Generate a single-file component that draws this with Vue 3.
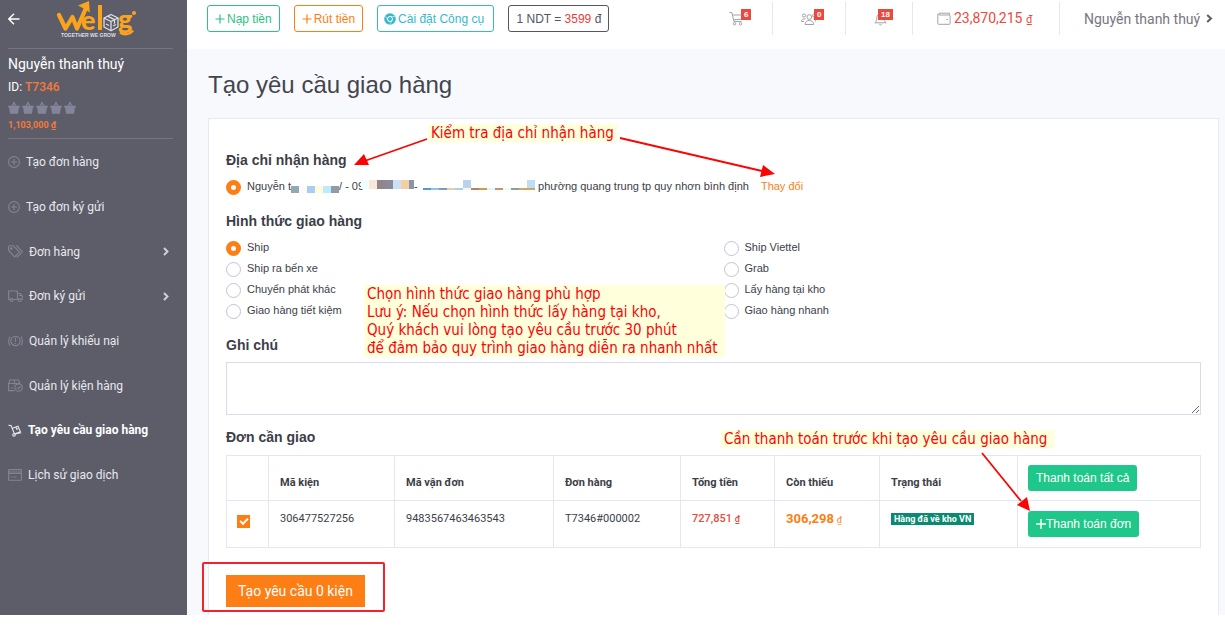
<script setup>
import { ref } from 'vue'

const menu = [
  { icon: 'plus', label: 'Tạo đơn hàng' },
  { icon: 'plus', label: 'Tạo đơn ký gửi' },
  { icon: 'tags', label: 'Đơn hàng', sub: true },
  { icon: 'truck', label: 'Đơn ký gửi', sub: true },
  { icon: 'alert', label: 'Quản lý khiếu nại' },
  { icon: 'box', label: 'Quản lý kiện hàng' },
  { icon: 'trolley', label: 'Tạo yêu cầu giao hàng', active: true },
  { icon: 'card', label: 'Lịch sử giao dịch' }
]

const methods = [
  'Ship', 'Ship Viettel',
  'Ship ra bến xe', 'Grab',
  'Chuyển phát khác', 'Lấy hàng tại kho',
  'Giao hàng tiết kiệm', 'Giao hàng nhanh'
]
const method = ref('Ship')
const address = ref('home')
const note = ref('')
const selected = ref(true)

const maskA = ['#93a8b0', '#fffaf8', '#a9cdf0', '#fdfcd8', '#bdebfb', '#8f9ba6']
const maskB = ['#f0ffff', '#f8e8d8', '#8f858a', '#8a8b97', '#cbe2f4', '#f3cfa4', '#8a95a5']
const maskC = ['#4c9dd0', '#92c2e8', '#8199bb', '#e4cfac', '#a9cdec', '#fdf5ec', '#b08368', '#d6984c', '#dcf8ff', '#c6936f', '#e4fff6', '#8ba09a', '#cfa468', '#cfa468']
</script>

<template>
  <div class="app">
    <aside class="sidebar">
      <div class="brand">
        <button class="back" aria-label="Quay lại">
          <svg width="12" height="12" viewBox="0 0 12 12"><path d="M11.5 6H1M6 .8 .8 6 6 11.2" fill="none" stroke="#fff" stroke-width="1.4" /></svg>
        </button>
        <svg class="logo" width="82" height="38" viewBox="0 0 82 38" role="img" aria-label="Welog">
          <g fill="none" stroke="#fca31c" stroke-width="4.200" stroke-linecap="round" stroke-linejoin="round">
            <path d="M3 15 9.500 28.500 16.500 17 21 28.500 30 8" />
          </g>
          <path d="M22 5.500 33 1l.8 11.500-4.300-3z" fill="#fca31c" />
          <g class="logo-text">
            <text x="25" y="30">e</text>
            <text x="62" y="29">g</text>
          </g>
          <path d="M44 5v25" fill="none" stroke="#fca31c" stroke-width="4" />
          <circle cx="78" cy="13" r="2" fill="#fca31c" />
          <path d="M64 32.500c4 3 10 2 13-2" fill="none" stroke="#fca31c" stroke-width="2.500" />
          <g fill="none" stroke="#dedee6" stroke-width="1.300" stroke-linejoin="round">
            <path d="M55 14.500 62 18v9l-7 3.800L48 27v-9z" />
            <path d="M48 18l7 3.500L62 18M55 21.500v9M51.500 16.200l7 3.500v4M50 24l3 1.500M57 26l3-1.500" />
          </g>
          <text class="logo-sub" x="5" y="37">TOGETHER WE GROW</text>
        </svg>
      </div>

      <div class="profile">
        <div class="name">Nguyễn thanh thuý</div>
        <div class="uid">ID: <b>T7346</b></div>
        <div class="rank">
          <svg v-for="n in 5" :key="n" width="12" height="12" viewBox="0 0 12 12"><path d="M.3 3.800h3L5 1.600V.3h2v1.300l1.700 2.200h3v2h-.9L10 11.700H2L1.200 5.800H.3zM4.700 3.800h2.600L6 2.300z" fill="#84859a" /></svg>
        </div>
        <div class="balance">1,103,000 ₫</div>
      </div>

      <nav>
        <ul class="menu">
          <li v-for="item in menu" :key="item.label">
            <a href="#" :class="{ active: item.active }">
              <svg v-if="item.icon === 'plus'" width="12" height="12" viewBox="0 0 12 12"><circle cx="6" cy="6" r="5.400" /><path d="M6 3v6M3 6h6" /></svg>
              <svg v-else-if="item.icon === 'tags'" width="15" height="13" viewBox="0 0 15 13"><path d="M.6 1.500v4l6 6.400 4.800-4.800L5.400.8H1.300zM8 .8h.8l5.500 6-4.900 5.200H8.500" /><circle cx="3.300" cy="3.600" r=".8" /></svg>
              <svg v-else-if="item.icon === 'truck'" width="15" height="12" viewBox="0 0 15 12"><path d="M2 9.500H.6V1h8.800v8.500H5M9.400 3.500h2.800l2.200 2.800v3.200h-1.200M9.400 9.500h.8M11 5.500h3" /><circle cx="3.500" cy="10" r="1.400" /><circle cx="11.700" cy="10" r="1.400" /></svg>
              <svg v-else-if="item.icon === 'alert'" width="15" height="12" viewBox="0 0 15 12"><circle cx="7.500" cy="6" r="4.600" /><path d="M7.500 3v3.800M7.500 8v1M2 1.500C.2 4 .2 8 2 10.500M13 1.500c1.800 2.500 1.800 6.500 0 9" /></svg>
              <svg v-else-if="item.icon === 'box'" width="15" height="13" viewBox="0 0 15 13"><path d="M6.500 11.600H.6V4.300L2 1h8.500L12 4.300M.6 4.500H12M6.300 1v4.500M3 9h2" /><circle cx="10.600" cy="8.600" r="3.700" /><path d="M9 8.600l1.200 1.200 2.200-2.300" /></svg>
              <svg v-else-if="item.icon === 'trolley'" width="14" height="13" viewBox="0 0 14 13"><path d="M.4 1.200 3 1.600 6.200 9.300M4.500 4.300l5.500-2.100 2.400 5.600-6.200 2.300M8 3.200l.8 2 1.300-.5M7.400 10l5.800-1.300" /><circle cx="6" cy="10.800" r="1.300" /></svg>
              <svg v-else width="14" height="12" viewBox="0 0 14 12"><rect x=".6" y=".6" width="12.800" height="10.600" rx=".5" /><path d="M.6 3h12.800M.6 4.500h12.800M2.500 8h2M5.500 8h3" /></svg>
              <span>{{ item.label }}</span>
              <svg v-if="item.sub" class="chev" width="6" height="9" viewBox="0 0 6 9"><path d="M1 1l3.500 3.500L1 8" /></svg>
            </a>
          </li>
        </ul>
      </nav>
    </aside>

    <div class="page">
      <header class="topbar">
        <div class="actions">
          <button class="outline green"><svg width="10" height="10" viewBox="0 0 10 10"><path d="M5 .5v9M.5 5h9" stroke="currentColor" stroke-width="1.200" /></svg>Nạp tiền</button>
          <button class="outline orange"><svg width="10" height="10" viewBox="0 0 10 10"><path d="M5 .5v9M.5 5h9" stroke="currentColor" stroke-width="1.200" /></svg>Rút tiền</button>
          <button class="outline cyan">
            <svg width="12" height="12" viewBox="0 0 12 12"><circle cx="6" cy="6" r="5.800" fill="currentColor" /><circle cx="6" cy="6" r="2.500" fill="none" stroke="#fff" stroke-width="1" /><path d="M6 3.500h5.200M3.800 7.200 1.300 3M8.200 7.200 5.800 11.600" stroke="#fff" stroke-width=".5" /></svg>Cài đặt Công cụ
          </button>
          <button class="outline dark">1 NDT = <em>3599</em> đ</button>
        </div>
        <div class="status">
          <a href="#" class="cell cart" aria-label="Giỏ hàng">
            <svg width="15" height="15" viewBox="0 0 15 15"><path d="M.5 1.500h2.300L5 10.500h7.500M3.300 4h10.200l-1.200 4.200-7.800.6" /><circle cx="5.500" cy="12.800" r="1.200" /><circle cx="11.500" cy="12.800" r="1.200" /></svg>
            <span class="badge">6</span>
          </a>
          <a href="#" class="cell team" aria-label="Nhóm">
            <svg width="15" height="14" viewBox="0 0 15 14"><circle cx="8.300" cy="5" r="2.300" /><circle cx="3" cy="3.500" r="1.600" /><circle cx="13" cy="3.500" r="1.500" /><path d="M4 12.500c0-5.500 8.600-5.500 8.600 0zM.5 9.500C.5 7.500 2 6.500 4.500 7M12.500 7c1 0 2 1 2 2.500M.5 9.500h2.500" /></svg>
            <span class="badge">0</span>
          </a>
          <a href="#" class="cell bell" aria-label="Thông báo">
            <svg width="13" height="14" viewBox="0 0 13 14"><path d="M.8 10.800c2-1.500 2-2.800 2-5C2.800 3.500 4.500 2 6.500 2s3.700 1.500 3.700 3.800c0 2.200 0 3.500 2 5zM5.300 12.300c.5 1 1.900 1 2.400 0M6.500 2V.8" /></svg>
            <span class="badge">18</span>
          </a>
          <a href="#" class="cell wallet">
            <svg width="14" height="13" viewBox="0 0 14 13"><path d="M12.500 3V1.200H2A1.300 1.300 0 0 0 2 3h10.200c.6 0 .9.300.9.900v7.500c0 .6-.3.900-.9.900H1.800c-.6 0-1-.3-1-.9V2M9.500 7.500h1.500" /></svg>
            <span>23,870,215 <small>₫</small></span>
          </a>
          <a href="#" class="cell user">Nguyễn thanh thuý
            <svg width="7" height="9" viewBox="0 0 7 9"><path d="M1.200 1l3.800 3.500L1.200 8" /></svg>
          </a>
        </div>
      </header>

      <main>
        <h1>Tạo yêu cầu giao hàng</h1>
        <form class="card" @submit.prevent>
          <h2>Địa chỉ nhận hàng</h2>
          <div class="address">
            <label>
              <input v-model="address" type="radio" name="address" value="home" />
              <span>Nguyễn t</span>
              <svg class="mask-a" width="48" height="7"><rect v-for="(c, i) in maskA" :key="i" :x="i * 8" y="0" width="8" height="7" :fill="c" /></svg>
              <span>/ - 09</span>
              <svg class="mask-b" width="53" height="9"><rect v-for="(c, i) in maskB" :key="i" :x="i * 8" y="0" width="8" height="9" :fill="c" /></svg>
              <span class="dash">-</span>
              <svg class="mask-c" width="112" height="10">
                <rect v-for="(c, i) in maskC" :key="i" :x="i * 8" y="8" width="8" height="2" :fill="c" />
                <rect x="40" y="0" width="8" height="8" fill="#b8d4ea" />
                <rect x="104" y="0" width="8" height="8" fill="#bfdcf5" />
              </svg>
              <span>phường quang trung tp quy nhơn bình định</span>
            </label>
            <a href="#">Thay đổi</a>
          </div>

          <h2 class="h-method">Hình thức giao hàng</h2>
          <div class="methods">
            <label v-for="m in methods" :key="m">
              <input v-model="method" type="radio" name="method" :value="m" />
              <span>{{ m }}</span>
            </label>
          </div>

          <h2 class="h-note"><label for="note">Ghi chú</label></h2>
          <textarea id="note" v-model="note"></textarea>

          <h2 class="h-orders">Đơn cần giao</h2>
          <table>
            <colgroup>
              <col class="c1" /><col class="c2" /><col class="c3" /><col class="c4" />
              <col class="c5" /><col class="c6" /><col class="c7" /><col />
            </colgroup>
            <thead>
              <tr>
                <th></th>
                <th>Mã kiện</th>
                <th>Mã vận đơn</th>
                <th>Đơn hàng</th>
                <th>Tổng tiền</th>
                <th>Còn thiếu</th>
                <th>Trạng thái</th>
                <th class="act"><button class="pay">Thanh toán tất cả</button></th>
              </tr>
            </thead>
            <tbody>
              <tr>
                <td class="pick"><input v-model="selected" type="checkbox" aria-label="Chọn kiện 306477527256" /></td>
                <td>306477527256</td>
                <td>9483567463463543</td>
                <td>T7346#000002</td>
                <td class="total">727,851 <small>₫</small></td>
                <td class="due"><b>306,298</b> <small>₫</small></td>
                <td><span class="tag">Hàng đã về kho VN</span></td>
                <td class="act">
                  <button class="pay"><svg width="10" height="10" viewBox="0 0 10 10"><path d="M5 0v10M0 5h10" stroke="#fff" stroke-width="1.400" /></svg>Thanh toán đơn</button>
                </td>
              </tr>
            </tbody>
          </table>

          <div class="submit">
            <button class="create">Tạo yêu cầu 0 kiện</button>
            <i class="frame"></i>
          </div>
        </form>
      </main>
    </div>

    <div class="notes">
      <p class="n1">Kiểm tra địa chỉ nhận hàng</p>
      <p class="n2">Chọn hình thức giao hàng phù hợp<br />Lưu ý: Nếu chọn hình thức lấy hàng tại kho,<br />Quý khách vui lòng tạo yêu cầu trước 30 phút<br />để đảm bảo quy trình giao hàng diễn ra nhanh nhất</p>
      <p class="n3">Cần thanh toán trước khi tạo yêu cầu giao hàng</p>
      <svg class="arrows" width="1225" height="615" viewBox="0 0 1225 615">
        <g stroke="#fb0404" stroke-width="1.800" fill="#fb0404">
          <path d="M427 139 366 160.500M620 138 762 171M982 453 1021 501" />
          <path d="M354 165l10-11 5 11zM775 174l-12-9-3 12zM1030 511l-3-14-10 8z" stroke="none" />
        </g>
      </svg>
    </div>
  </div>
</template>

<style>
body {
  background: #fff;
}
</style>

<style scoped>
* {
  box-sizing: border-box;
}
.app {
  position: relative;
  display: flex;
  font: 11px/16px "Liberation Sans", Arial, sans-serif;
  color: #3c3e48;
}
a {
  color: inherit;
  text-decoration: none;
}
button {
  font: inherit;
  cursor: pointer;
}
svg {
  flex: none;
}

/* sidebar */
.sidebar {
  flex: none;
  width: 187px;
  padding: 0 14px 0 8px;
  background: #5c5d69;
  color: #fff;
  font-family: Roboto, "Liberation Sans", sans-serif;
}
.brand {
  display: flex;
  align-items: center;
  gap: 36px;
  height: 49px;
  padding-bottom: 11px;
  border-bottom: 1px solid #74757f;
}
.back {
  display: flex;
  padding: 0;
  border: 0;
  background: none;
}
.logo-text {
  font: 900 27px Lato, sans-serif;
  fill: #fca31c;
}
.logo-sub {
  font: 700 5px "Liberation Sans", sans-serif;
  fill: #dedee6;
}
.profile {
  height: 90px;
  border-bottom: 1px solid #74757f;
}
.name {
  padding-top: 5px;
  font-size: 14px;
  line-height: 20px;
}
.uid {
  padding-top: 4px;
  font-size: 12px;
  line-height: 18px;
}
.uid b {
  color: #f5793a;
  font-weight: 500;
}
.rank {
  display: flex;
  gap: 2px;
  padding-top: 6px;
}
.balance {
  padding-top: 4px;
  color: #f5793a;
  font-size: 9px;
  font-weight: 700;
  line-height: 14px;
}
.menu {
  margin: 0;
  padding: 1px 0 0;
  list-style: none;
}
.menu a {
  display: flex;
  align-items: center;
  gap: 6px;
  height: 45px;
  padding-right: 4px;
  color: #e8e8ee;
  font-size: 12px;
}
.menu li:nth-child(3n + 1) a {
  height: 44px;
}
.menu svg {
  fill: none;
  stroke: #83848f;
  stroke-width: 1.1;
}
.menu .active {
  color: #fff;
  font-weight: 700;
}
.menu .active svg {
  stroke: #e4e4ea;
}
.menu .chev {
  margin-left: auto;
  stroke: #cfcfd8;
  stroke-width: 2;
}

/* top bar */
.page {
  flex: 1;
  min-width: 0;
  background: #f8f9fd;
}
.topbar {
  display: flex;
  justify-content: space-between;
  height: 49px;
  padding-left: 20px;
  background: #fff;
}
.actions {
  display: flex;
  gap: 14px;
  padding-top: 5px;
}
.outline {
  display: flex;
  align-items: center;
  gap: 2px;
  height: 27px;
  padding: 0 7px;
  border: 1px solid currentColor;
  border-radius: 3px;
  background: #fff;
  font-size: 12px;
  white-space: pre;
}
.green {
  color: #2cc185;
}
.orange {
  color: #fd7e14;
}
.cyan {
  padding: 0 6px;
  color: #36b9cc;
}
.dark {
  gap: 0;
  color: #55565f;
}
.outline em {
  color: #ee3c37;
  font-style: normal;
}
.status {
  display: flex;
  height: 33px;
  margin-top: 2px;
  font: 14px/20px Roboto, "Liberation Sans", sans-serif;
}
.status small {
  font-size: 11px;
}
.cell {
  position: relative;
  display: flex;
  align-items: center;
  border-right: 1px solid #e6e7f2;
  white-space: nowrap;
}
.cell svg {
  fill: none;
  stroke: #a3a3a3;
  stroke-width: 1;
}
.badge {
  position: absolute;
  top: 7px;
  padding: 0 3px;
  background: #ea4a3d;
  color: #fff;
  font: 700 8px/11px "Liberation Sans", sans-serif;
}
.cart {
  width: 44px;
}
.cart .badge {
  left: 12px;
}
.team {
  width: 73px;
  padding-left: 28px;
}
.team .badge {
  left: 41px;
}
.bell {
  width: 67px;
  padding-left: 28px;
}
.bell .badge {
  left: 32px;
}
.wallet {
  gap: 3px;
  width: 147px;
  padding-left: 24px;
  color: #ea4a3d;
}
.user {
  justify-content: space-between;
  width: 165px;
  padding: 0 12px 0 24px;
  border: 0;
  color: #77777d;
}
.user svg {
  stroke: #5c5d66;
  stroke-width: 2;
}

/* content */
main {
  padding: 21px 6px 0 21px;
}
h1 {
  margin: 0 0 18px;
  font-size: 24px;
  font-weight: 400;
  line-height: 30px;
  color: #43454e;
}
.card {
  padding: 31px 17px 8px;
  border: 1px solid #e8e9f3;
  border-bottom: 0;
  background: #fff;
}
h2 {
  margin: 0;
  font-size: 14px;
  font-weight: 700;
  line-height: 20px;
}
.address {
  display: flex;
  gap: 12px;
  height: 20px;
  margin-top: 6px;
  line-height: 20px;
  white-space: nowrap;
}
.address label {
  display: flex;
}
.address a {
  color: #fd7e14;
}
input[type='radio'] {
  flex: none;
  appearance: none;
  width: 15px;
  height: 15px;
  margin: 4px 6px 0 0;
  border: 1px solid #c3c3d8;
  border-radius: 50%;
  background: #fff;
}
input[type='radio']:checked {
  border: 5px solid #fd7e14;
}
.mask-a {
  margin-top: 10px;
}
.mask-b {
  margin: 4px 0 0 -3px;
}
.dash {
  width: 9px;
}
.mask-c {
  margin: 4px 3px 0 0;
}
.h-method {
  margin-top: 15px;
}
.methods {
  display: grid;
  grid-template-columns: 1fr 1fr;
  column-gap: 20px;
  margin-top: 6px;
}
.methods label {
  display: flex;
  line-height: 21px;
}
.h-note {
  margin-top: 14px;
}
textarea {
  display: block;
  width: 100%;
  height: 53px;
  margin-top: 7px;
  border: 1px solid #d9dbe9;
  background: #fff;
  font: inherit;
}
.h-orders {
  margin-top: 12px;
}
table {
  width: 100%;
  margin-top: 8px;
  border-collapse: collapse;
  table-layout: fixed;
  font-family: Roboto, "Liberation Sans", sans-serif;
}
table small {
  font-size: 9px;
}
.c1 { width: 42px; }
.c2 { width: 126px; }
.c3 { width: 159px; }
.c4 { width: 127px; }
.c5 { width: 94px; }
.c6 { width: 105px; }
.c7 { width: 138px; }
th,
td {
  padding: 10px 10px 9px 11px;
  border: 1px solid #e4e6f1;
  text-align: left;
  white-space: nowrap;
}
th {
  vertical-align: bottom;
  font-weight: 700;
}
td {
  vertical-align: top;
}
.pick {
  padding-left: 10px;
}
.pick input {
  display: flex;
  align-items: center;
  justify-content: center;
  appearance: none;
  width: 13px;
  height: 13px;
  margin: 4px 0 0;
  border: 1px solid #fd7e14;
  background: #fff;
}
.pick input:checked {
  background: #fd7e14;
}
.pick input:checked::after {
  content: '';
  width: 6px;
  height: 3px;
  margin-bottom: 2px;
  border: solid #fff;
  border-width: 0 0 2px 2px;
  transform: rotate(-45deg);
}
.total {
  color: #ea4a3d;
  font-weight: 500;
}
.due {
  color: #fd7e14;
}
.due b {
  font-size: 13px;
}
.tag {
  display: inline-block;
  padding: 0 3px;
  background: #0b8a72;
  color: #fff;
  font-size: 9px;
  font-weight: 700;
  line-height: 12px;
}
.act {
  padding: 9px 10px;
}
td.act {
  padding: 10px;
}
.pay {
  display: flex;
  align-items: center;
  height: 26px;
  padding: 0 8px;
  border: 0;
  border-radius: 3px;
  background: #1fc88a;
  color: #fff;
  font: 12px/16px "Liberation Sans", Arial, sans-serif;
}
.submit {
  position: relative;
  display: flex;
  margin-top: 27px;
}
.create {
  height: 32px;
  padding: 0 12px;
  border: 0;
  background: #fd7e14;
  color: #fff;
  font: 14px/20px Roboto, "Liberation Sans", sans-serif;
}
.frame {
  position: absolute;
  top: -13px;
  left: -24px;
  width: 183px;
  height: 50px;
  border: 2px solid #f5222d;
  border-radius: 2px;
  pointer-events: none;
}

/* guide notes over the form */
.notes {
  position: absolute;
  inset: 0;
  overflow: hidden;
  pointer-events: none;
}
.notes p {
  position: absolute;
  margin: 0;
  padding: 0 7px 0 3px;
  background: #ffffdc;
  color: #fb0404;
  font: 15px/18px "DejaVu Sans Condensed", "DejaVu Sans", sans-serif;
  white-space: nowrap;
}
.notes .n1 {
  top: 124px;
  left: 428px;
  padding-right: 3px;
}
.notes .n2 {
  top: 285px;
  left: 364px;
}
.notes .n3 {
  top: 430px;
  left: 721px;
}
.arrows {
  position: absolute;
  top: 0;
  left: 0;
}
</style>
